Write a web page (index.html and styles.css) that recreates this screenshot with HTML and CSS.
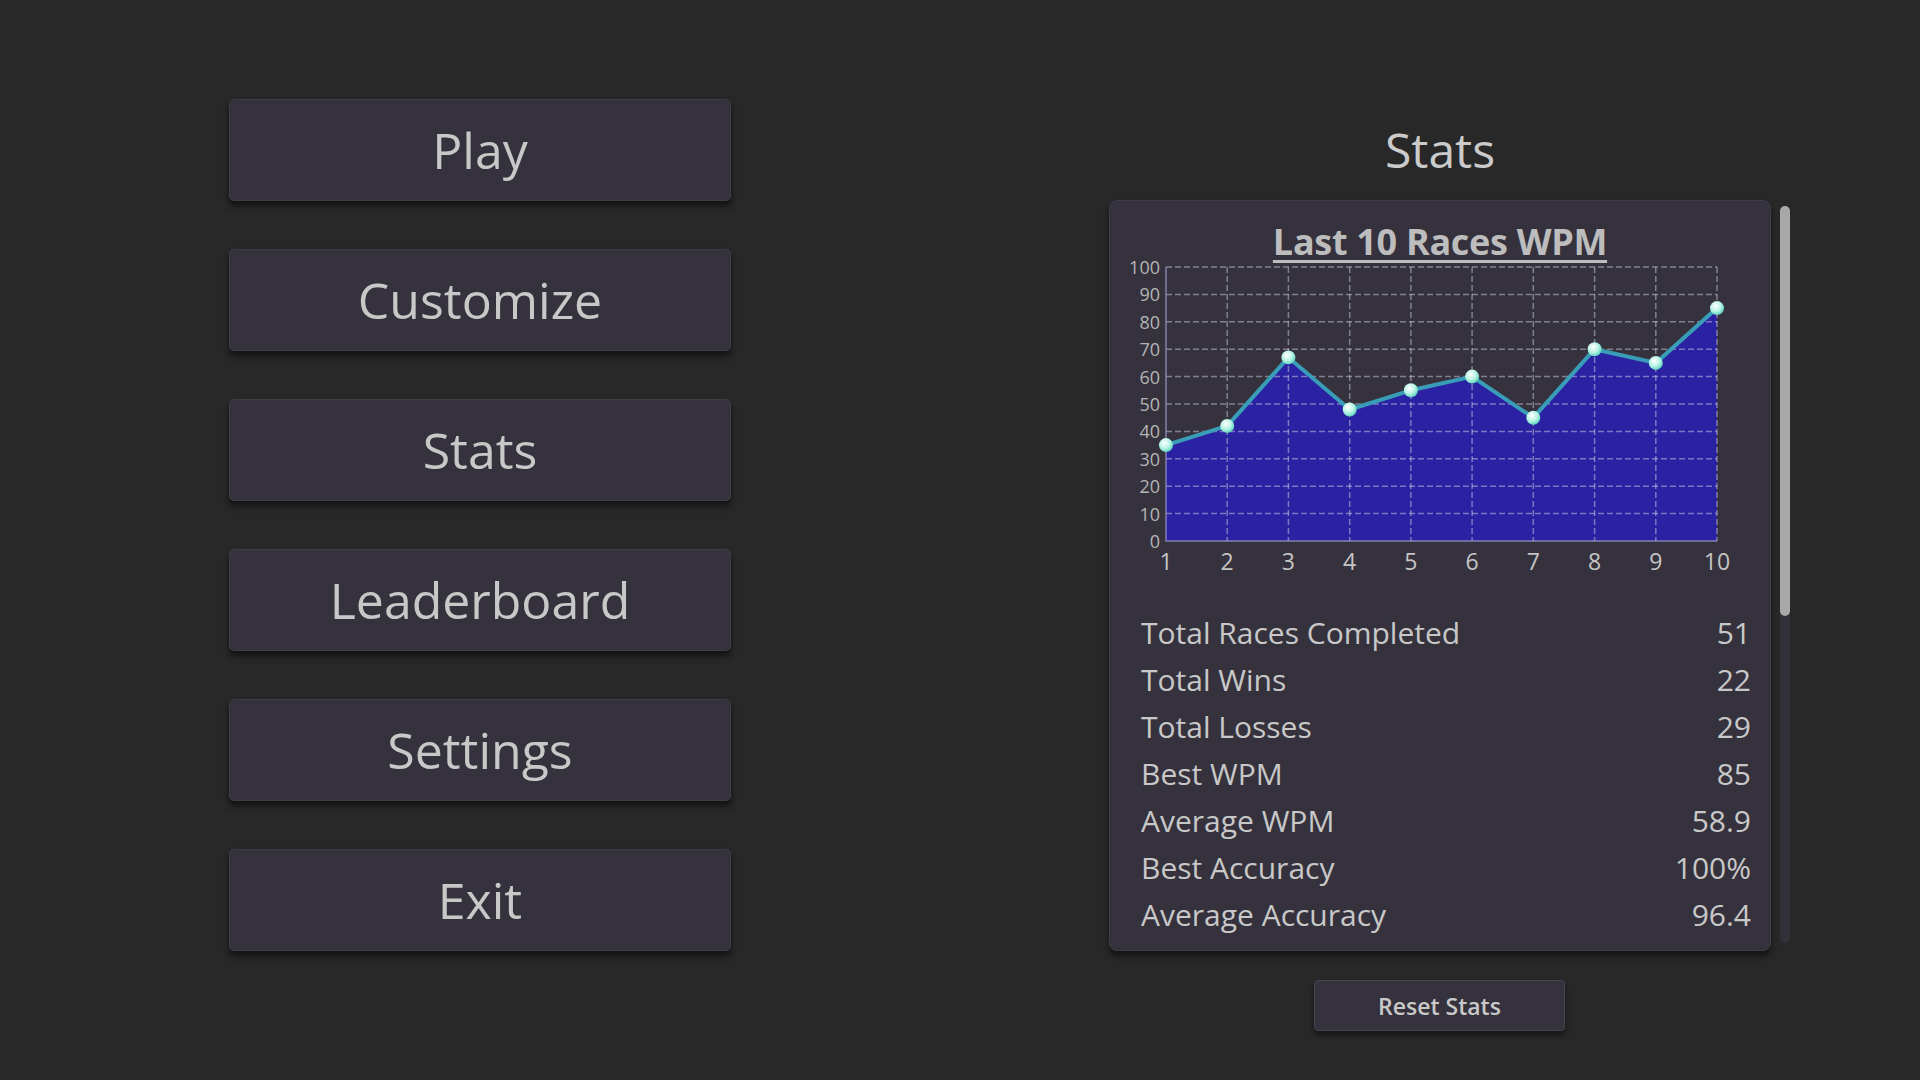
FILE: index.html
```html
<!doctype html>
<html lang="en">
  <head>
    <meta charset="UTF-8" />
    <meta name="viewport" content="width=device-width, initial-scale=1.0" />
    <title>Typing Racer - Stats</title>
    <link rel="stylesheet" href="styles.css">
  </head>
  <body>
    <div class="screen">
      <div class="menu">
        <button class="menu-button">Play</button>
        <button class="menu-button">Customize</button>
        <button class="menu-button">Stats</button>
        <button class="menu-button">Leaderboard</button>
        <button class="menu-button">Settings</button>
        <button class="menu-button">Exit</button>
      </div>

      <div class="stats-column">
        <h1 class="stats-title">Stats</h1>
        <div class="panel-row">
          <div class="stats-panel">
            <h2 class="chart-title">Last 10 Races WPM</h2>
            <svg class="chart" viewBox="0 0 662 320" width="662" height="320">
              <defs>
                <radialGradient id="dot" cx="0.4" cy="0.35" r="0.7">
                  <stop offset="0" stop-color="#ffffff" />
                  <stop offset="0.55" stop-color="#b8f3e4" />
                  <stop offset="1" stop-color="#4fd0b4" />
                </radialGradient>
              </defs>

              <!-- area under the line -->
              <polygon class="area" points="57,181.1 118.2,161.9 179.4,93.4 240.7,145.5 301.9,126.3 363.1,112.6 424.3,153.7 485.6,85.2 546.8,98.9 608,44.1 608,277 57,277" />

              <!-- grid -->
              <g class="grid">
                <line x1="57" y1="3" x2="608" y2="3" />
                <line x1="57" y1="30.4" x2="608" y2="30.4" />
                <line x1="57" y1="57.8" x2="608" y2="57.8" />
                <line x1="57" y1="85.2" x2="608" y2="85.2" />
                <line x1="57" y1="112.6" x2="608" y2="112.6" />
                <line x1="57" y1="140" x2="608" y2="140" />
                <line x1="57" y1="167.4" x2="608" y2="167.4" />
                <line x1="57" y1="194.8" x2="608" y2="194.8" />
                <line x1="57" y1="222.2" x2="608" y2="222.2" />
                <line x1="57" y1="249.6" x2="608" y2="249.6" />
                <line x1="118.2" y1="3" x2="118.2" y2="277" />
                <line x1="179.4" y1="3" x2="179.4" y2="277" />
                <line x1="240.7" y1="3" x2="240.7" y2="277" />
                <line x1="301.9" y1="3" x2="301.9" y2="277" />
                <line x1="363.1" y1="3" x2="363.1" y2="277" />
                <line x1="424.3" y1="3" x2="424.3" y2="277" />
                <line x1="485.6" y1="3" x2="485.6" y2="277" />
                <line x1="546.8" y1="3" x2="546.8" y2="277" />
                <line x1="608" y1="3" x2="608" y2="277" />
              </g>
              <polyline class="axis" points="57,3 57,277 608,277" />

              <g class="y-labels">
                <text x="51" y="3">100</text>
                <text x="51" y="30.4">90</text>
                <text x="51" y="57.8">80</text>
                <text x="51" y="85.2">70</text>
                <text x="51" y="112.6">60</text>
                <text x="51" y="140">50</text>
                <text x="51" y="167.4">40</text>
                <text x="51" y="194.8">30</text>
                <text x="51" y="222.2">20</text>
                <text x="51" y="249.6">10</text>
                <text x="51" y="277">0</text>
              </g>
              <g class="x-labels">
                <text x="57" y="297">1</text>
                <text x="118.2" y="297">2</text>
                <text x="179.4" y="297">3</text>
                <text x="240.7" y="297">4</text>
                <text x="301.9" y="297">5</text>
                <text x="363.1" y="297">6</text>
                <text x="424.3" y="297">7</text>
                <text x="485.6" y="297">8</text>
                <text x="546.8" y="297">9</text>
                <text x="608" y="297">10</text>
              </g>

              <polyline class="line" points="57,181.1 118.2,161.9 179.4,93.4 240.7,145.5 301.9,126.3 363.1,112.6 424.3,153.7 485.6,85.2 546.8,98.9 608,44.1" />
              <g class="dots">
                <circle cx="57" cy="181.1" r="7" />
                <circle cx="118.2" cy="161.9" r="7" />
                <circle cx="179.4" cy="93.4" r="7" />
                <circle cx="240.7" cy="145.5" r="7" />
                <circle cx="301.9" cy="126.3" r="7" />
                <circle cx="363.1" cy="112.6" r="7" />
                <circle cx="424.3" cy="153.7" r="7" />
                <circle cx="485.6" cy="85.2" r="7" />
                <circle cx="546.8" cy="98.9" r="7" />
                <circle cx="608" cy="44.1" r="7" />
              </g>
            </svg>

            <ul class="stat-list">
              <li><span>Total Races Completed</span><span>51</span></li>
              <li><span>Total Wins</span><span>22</span></li>
              <li><span>Total Losses</span><span>29</span></li>
              <li><span>Best WPM</span><span>85</span></li>
              <li><span>Average WPM</span><span>58.9</span></li>
              <li><span>Best Accuracy</span><span>100%</span></li>
              <li><span>Average Accuracy</span><span>96.4</span></li>
            </ul>
          </div>
          <div class="scrollbar"><div class="scroll-thumb"></div></div>
        </div>
        <button class="reset-button">Reset Stats</button>
      </div>
    </div>
  </body>
</html>
```

FILE: styles.css
```css
* {
  box-sizing: border-box;
  margin: 0;
  padding: 0;
}

body {
  font-family: "Open Sans", "Noto Sans", sans-serif;
  background: #282828;
  color: #c8c8c8;
  width: 1920px;
  height: 1080px;
  overflow: hidden;
}

.screen {
  display: flex;
  align-items: flex-start;
  padding: 99px 0 0 229px;
  gap: 378px;
}

.menu {
  display: flex;
  flex-direction: column;
  gap: 48px;
  width: 502px;
}

.menu-button {
  height: 102px;
  background: #35323d;
  border: 1px solid #3f3c47;
  border-radius: 5px;
  box-shadow: 0 5px 6px rgba(0, 0, 0, 0.55);
  color: #c8c8c8;
  font-family: "Open Sans", "Noto Sans", sans-serif;
  font-size: 50px;
  cursor: pointer;
}

.stats-column {
  display: flex;
  flex-direction: column;
  width: 681px;
}

.stats-title {
  width: 662px;
  text-align: center;
  font-size: 48px;
  font-weight: 400;
  line-height: 64px;
  margin: 19px 0 18px;
  color: #cbcbcb;
}

.panel-row {
  display: flex;
  align-items: flex-start;
  gap: 9px;
}

.stats-panel {
  width: 662px;
  height: 751px;
  padding-top: 19px;
  background: #35323d;
  border: 1px solid #3f3c47;
  border-radius: 8px;
  box-shadow: 0 5px 6px rgba(0, 0, 0, 0.5);
}

.chart-title {
  text-align: center;
  font-size: 36px;
  font-weight: 700;
  line-height: 44px;
  letter-spacing: -0.3px;
  color: #bdbdbd;
  text-decoration: underline;
  text-decoration-thickness: 3px;
  text-underline-offset: 5px;
}

.chart {
  display: block;
  overflow: visible;
  margin-left: -1px;
}

.chart .area {
  fill: #2a22a2;
}

.chart .grid line {
  stroke: rgba(205, 205, 225, 0.5);
  stroke-width: 1.5;
  stroke-dasharray: 6 3;
}

.chart .axis {
  fill: none;
  stroke: rgba(150, 150, 200, 0.6);
  stroke-width: 2;
}

.chart .y-labels text {
  font-family: "Open Sans", "Noto Sans", sans-serif;
  font-size: 18px;
  fill: #b4b4b4;
  text-anchor: end;
  dominant-baseline: central;
}

.chart .x-labels text {
  font-family: "Open Sans", "Noto Sans", sans-serif;
  font-size: 23px;
  fill: #c4c4c4;
  text-anchor: middle;
  dominant-baseline: central;
}

.chart .line {
  fill: none;
  stroke: #3a9db8;
  stroke-width: 4;
  stroke-linejoin: round;
}

.chart .dots circle {
  fill: url(#dot);
}

.stat-list {
  list-style: none;
  margin-top: 25px;
  padding: 0 19px 0 31px;
}

.stat-list li {
  display: flex;
  justify-content: space-between;
  font-size: 30px;
  line-height: 47px;
  color: #c8c8c8;
}

.scrollbar {
  width: 10px;
  height: 737px;
  margin-top: 6px;
  border-radius: 5px;
  background: #333039;
}

.scroll-thumb {
  height: 410px;
  border-radius: 5px;
  background: #a8a8a8;
}

.reset-button {
  align-self: flex-start;
  width: 251px;
  height: 51px;
  margin: 29px 0 0 205px;
  background: #35323d;
  border: 1px solid #47444f;
  border-radius: 4px;
  box-shadow: 0 4px 5px rgba(0, 0, 0, 0.5);
  color: #c8c8c8;
  font-family: "Open Sans", "Noto Sans", sans-serif;
  font-size: 23px;
  font-weight: 600;
  cursor: pointer;
}
```
